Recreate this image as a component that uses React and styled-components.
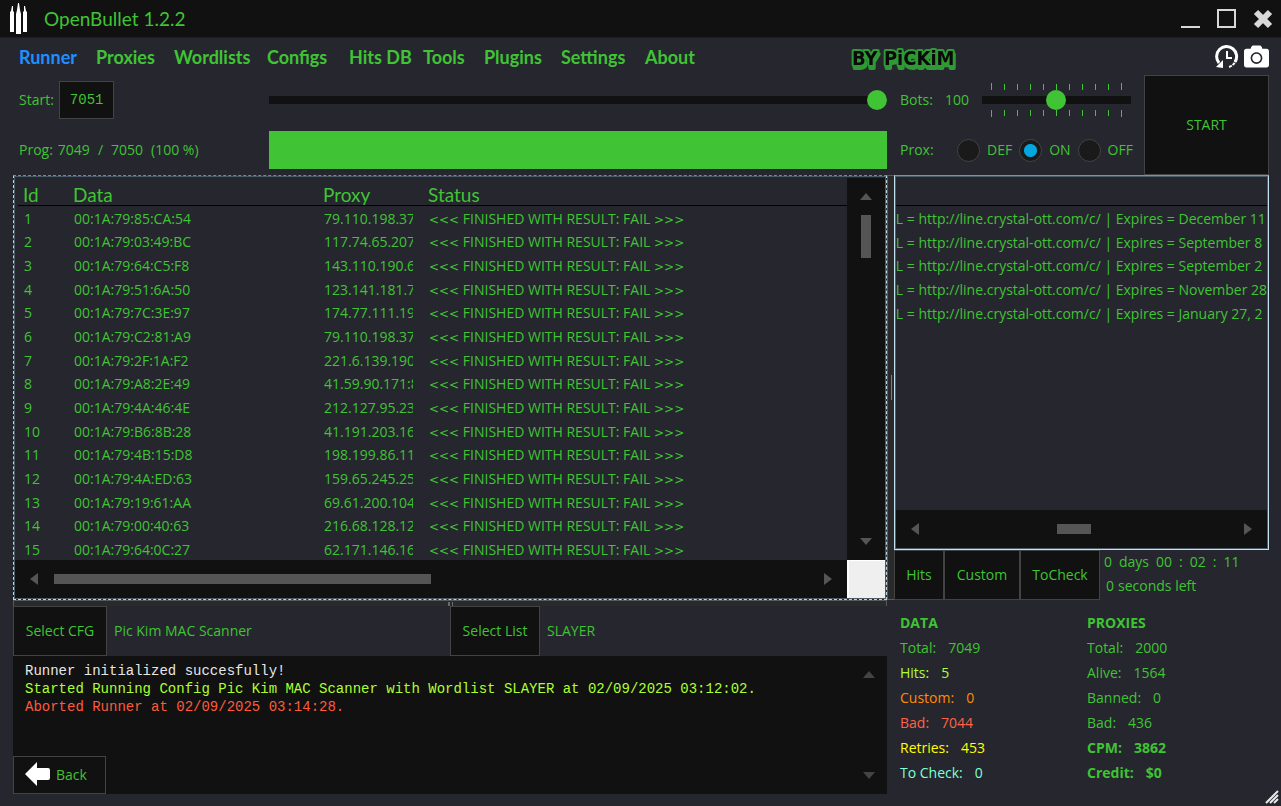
import React from "react";
import styled, { createGlobalStyle } from "styled-components";
import { FaCamera } from "react-icons/fa";

const green = "#40c334";
const bg = "#26262f";
const dark = "#111111";
const edge = "#434343";
const thumb = "#555555";

const Global = createGlobalStyle`
  * { box-sizing: border-box; }
  html, body { margin: 0; padding: 0; background: ${bg}; }
  body, button, input { font-family: "Open Sans", "Noto Sans", sans-serif; font-size: 14px; color: ${green}; }
`;

const Window = styled.div`
  display: flex;
  flex-direction: column;
  height: 100vh;
  min-height: 700px;
  min-width: 1000px;
  background: ${bg};
  line-height: 20px;
  overflow: hidden;
`;

const TitleBar = styled.header`
  display: flex;
  align-items: center;
  height: 38px;
  padding: 0 8px;
  background: ${dark};
  border-bottom: 1px solid #1e1e22;
`;

const Title = styled.h1`
  flex: 1;
  margin: 0 0 0 15px;
  font: 400 19px/36px Lato, sans-serif;
`;

const IconButton = styled.button`
  display: flex;
  padding: 0;
  border: 0;
  background: none;
  color: ${(p) => p.$color || "#ffffff"};
`;

const WindowButtons = styled.div`
  display: flex;
  gap: 16px;
`;

const MenuBar = styled.nav`
  display: flex;
  align-items: center;
  height: 37px;
  padding: 0 12px 0 19px;
`;

const MenuLinks = styled.div`
  display: grid;
  flex: 1;
  grid-template-columns: 77px 78px 93px 82px 74px 61px 77px 84px 1fr;
`;

const MenuLink = styled.a`
  color: ${(p) => (p.$active ? "#1e90ff" : green)};
  font: 700 18px/36px Lato, sans-serif;
  text-decoration: none;
  white-space: nowrap;
`;

const Badge = styled.svg`
  margin-right: 262px;
  overflow: visible;
  filter: drop-shadow(1px 3px 0 #2f9a35);
`;

const MenuIcons = styled.div`
  display: flex;
  align-items: center;
  gap: 5px;
`;

const Main = styled.main`
  display: grid;
  flex: 1;
  min-height: 0;
  grid-template-columns: minmax(0, 1fr) 7px 375px;
  grid-template-rows: 100px minmax(0, 1fr) 194px;
  padding: 0 12px 12px 13px;
`;

const ProgressPanel = styled.section`
  display: grid;
  grid-template-columns: 256px 1fr;
  grid-template-rows: 50px 50px;
  align-items: center;
  grid-column: 1;
`;

const Field = styled.label`
  display: flex;
  align-items: center;
  gap: 5px;
  padding-left: 6px;
  white-space: pre;
`;

const Counts = styled.span`
  display: flex;
  gap: 8px;
`;

const StartInput = styled.input`
  width: 55px;
  height: 38px;
  padding: 0 0 0 10px;
  border: 1px solid ${edge};
  background: ${dark};
  font-family: "Liberation Mono", monospace;
`;

const Slider = styled.input`
  appearance: none;
  display: block;
  width: 100%;
  height: 20px;
  margin: 0;
  background: linear-gradient(${dark}, ${dark}) center / 100% 8px no-repeat;
  &::-webkit-slider-thumb {
    appearance: none;
    width: 20px;
    height: 20px;
    border-radius: 50%;
    background: ${green};
  }
`;

const ProgressBar = styled.div`
  height: 38px;
  background: ${green};
`;

const RunPanel = styled.section`
  display: grid;
  grid-template-columns: 1fr 125px;
  grid-column: 3;
`;

const RunRows = styled.div`
  display: grid;
  grid-template-rows: 50px 50px;
  align-items: center;
  padding-left: 6px;
`;

const RunRow = styled.div`
  display: grid;
  grid-template-columns: ${(p) => p.$columns};
  align-items: center;
`;

const Ticks = styled.div`
  display: flex;
  justify-content: space-between;
  align-items: ${(p) => p.$align};
  height: 7px;
  padding: 0 9px;
`;

const Tick = styled.i`
  width: 1px;
  height: ${(p) => (p.$long ? 7 : 6)}px;
  background: ${green};
`;

const RadioGroup = styled.div`
  display: flex;
  gap: 7px;
`;

const RadioLabel = styled.label`
  display: flex;
  align-items: center;
  gap: 7px;
`;

const Radio = styled.input`
  appearance: none;
  width: 23px;
  height: 23px;
  margin: 0;
  border: 1px solid ${edge};
  border-radius: 50%;
  background: #1a1a1a;
  &:checked {
    background: radial-gradient(circle, #05a6e0 6px, #1a1a1a 7px);
  }
`;

const Button = styled.button`
  display: flex;
  align-items: center;
  justify-content: ${(p) => p.$align || "center"};
  gap: 5px;
  width: ${(p) => p.$width};
  height: ${(p) => p.$height || "50px"};
  padding: ${(p) => (p.$align ? "0 11px" : "0")};
  border: 1px solid ${edge};
  background: ${dark};
  line-height: 20px;
`;

const ResultsBox = styled.section`
  display: grid;
  grid-template-columns: minmax(0, 1fr) 38px;
  grid-template-rows: minmax(0, 1fr) 38px;
  grid-column: 1;
  border: 1px dashed #b9d7e6;
  border-top-color: #5591bd;
  box-shadow: inset 0 0 0 1px #4b5c68;
  padding: 2px 1px 1px 1px;
`;

const TableView = styled.div`
  overflow: hidden;
  padding-left: 3px;
`;

const Table = styled.table`
  width: 100%;
  border-spacing: 0;
  table-layout: fixed;
`;

const Th = styled.th`
  width: ${(p) => p.$width};
  height: 28px;
  padding: 6px 0 0 5px;
  border-bottom: 1px solid #000000;
  font: 400 19px/20px Lato, sans-serif;
  text-align: left;
`;

const Tr = styled.tr`
  height: 24px;
  &:nth-child(3n + 2) {
    height: 23px;
  }
`;

const Td = styled.td`
  padding: 1px 10px 0 6px;
  line-height: 22px;
  white-space: nowrap;
`;

const Clip = styled.div`
  overflow: hidden;
`;

const Chevrons = styled.span`
  font-family: "DejaVu Sans", sans-serif;
  font-size: 12px;
  line-height: 12px;
`;

const ScrollTrack = styled.div`
  display: flex;
  flex-direction: ${(p) => (p.$vertical ? "column" : "row")};
  align-items: center;
  justify-content: space-between;
  padding: ${(p) => (p.$vertical ? "15px 0" : "0 15px")};
  background: ${dark};
`;

const ThumbLane = styled.div`
  display: flex;
  flex: 1;
  flex-direction: ${(p) => (p.$vertical ? "column" : "row")};
  padding: ${(p) => p.$pad};
`;

const Thumb = styled.div`
  width: ${(p) => p.$w};
  height: ${(p) => p.$h};
  background: ${thumb};
`;

const Corner = styled.div`
  border: solid #ffffff;
  border-width: 1px 0 0 2px;
  background: #efefef;
`;

const VSplitter = styled.div`
  display: flex;
  align-items: center;
  justify-content: center;
  grid-column: 2;
  border: 1px solid #5a5a5a;
  border-right: 0;
  background: #2a2a2a;
`;

const VGrip = styled.div`
  width: 1px;
  height: 25px;
  background: #7c7c7c;
`;

const HitsPane = styled.section`
  display: grid;
  grid-template-rows: minmax(0, 1fr) 50px;
  grid-column: 3;
`;

const HitsBox = styled.div`
  display: grid;
  grid-template-rows: 29px minmax(0, 1fr) 38px;
  border: 1px solid #c2e2f2;
  border-top-color: #5a9bc8;
  box-shadow: inset 0 0 0 1px #4b5c68;
  padding: 1px;
`;

const HitsHeader = styled.div`
  border-bottom: 1px solid #000000;
`;

const HitList = styled.ul`
  overflow: hidden;
  margin: 0;
  padding: 1px 0 0;
  list-style: none;
`;

const Hit = styled.li`
  height: 24px;
  margin-left: -19px;
  line-height: 23px;
  white-space: nowrap;
  &:nth-child(3n + 2) {
    height: 23px;
  }
`;

const HitActions = styled.div`
  display: flex;
`;

const Timer = styled.div`
  padding-left: 4px;
  line-height: 24px;
  white-space: nowrap;
`;

const TimerRow = styled.div`
  display: flex;
  gap: ${(p) => p.$gap};
  padding-left: ${(p) => p.$indent};
`;

const BottomLeft = styled.section`
  display: grid;
  grid-template-rows: 6px 50px minmax(0, 1fr);
  grid-column: 1;
`;

const HSplitter = styled.div`
  display: flex;
  align-items: flex-end;
  justify-content: center;
  gap: 2px;
  border: 1px solid #5a5a5a;
  border-bottom: 0;
  background: #2a2a2a;
`;

const HGrip = styled.div`
  width: ${(p) => p.$w};
  height: 4px;
  background: #6a6a6a;
`;

const Pickers = styled.div`
  display: grid;
  grid-template-columns: 1fr 1fr;
`;

const Picker = styled.div`
  display: flex;
  align-items: center;
  gap: 7px;
`;

const Log = styled.div`
  display: grid;
  grid-template-columns: 1fr 37px;
  background: ${dark};
`;

const LogMain = styled.div`
  display: flex;
  flex-direction: column;
  justify-content: space-between;
`;

const LogLines = styled.div`
  padding: 6px 0 0 12px;
  font: 14px/18px "Liberation Mono", monospace;
`;

const LogLine = styled.div`
  color: ${(p) => p.$color};
`;

const Stats = styled.section`
  display: grid;
  grid-template-columns: 187px 1fr;
  grid-column: 3;
  padding: 10px 0 0 6px;
`;

const StatHead = styled.h2`
  margin: 0;
  font-size: 14px;
  line-height: 25px;
`;

const StatRow = styled.div`
  display: flex;
  gap: 12px;
  color: ${(p) => p.$color || green};
  font-weight: ${(p) => (p.$bold ? 700 : 400)};
  line-height: 25px;
`;

const ResizeGrip = styled.svg`
  position: absolute;
  right: 2px;
  bottom: 2px;
`;

const Shell = styled.div`
  position: relative;
`;

const rows = [
  ["00:1A:79:85:CA:54", "79.110.198.37"],
  ["00:1A:79:03:49:BC", "117.74.65.207"],
  ["00:1A:79:64:C5:F8", "143.110.190.6"],
  ["00:1A:79:51:6A:50", "123.141.181.7"],
  ["00:1A:79:7C:3E:97", "174.77.111.19"],
  ["00:1A:79:C2:81:A9", "79.110.198.37"],
  ["00:1A:79:2F:1A:F2", "221.6.139.190"],
  ["00:1A:79:A8:2E:49", "41.59.90.171:8"],
  ["00:1A:79:4A:46:4E", "212.127.95.23"],
  ["00:1A:79:B6:8B:28", "41.191.203.16"],
  ["00:1A:79:4B:15:D8", "198.199.86.11"],
  ["00:1A:79:4A:ED:63", "159.65.245.25"],
  ["00:1A:79:19:61:AA", "69.61.200.104"],
  ["00:1A:79:00:40:63", "216.68.128.12"],
  ["00:1A:79:64:0C:27", "62.171.146.16"],
];

const hits = ["December 11", "September 8", "September 2", "November 28", "January 27, 2"];

const dataStats = [
  ["Total:", "7049"],
  ["Hits:", "5", "#adff2f"],
  ["Custom:", "0", "#ff8c00"],
  ["Bad:", "7044", "#ff6347"],
  ["Retries:", "453", "#ffff00"],
  ["To Check:", "0", "#7fffd4"],
];

const proxyStats = [
  ["Total:", "2000"],
  ["Alive:", "1564"],
  ["Banned:", "0"],
  ["Bad:", "436"],
  ["CPM:", "3862", green, true],
  ["Credit:", "$0", green, true],
];

const arrows = {
  up: "M0 7 L6 0 L12 7Z",
  down: "M0 0 L6 7 L12 0Z",
  left: "M8 0 L0 6 L8 12Z",
  right: "M0 0 L8 6 L0 12Z",
};

function Arrow({ dir, color = thumb }) {
  const tall = dir === "left" || dir === "right";
  return (
    <svg width={tall ? 8 : 12} height={tall ? 12 : 7} aria-hidden="true">
      <path d={arrows[dir]} fill={color} />
    </svg>
  );
}

function TickRow({ align }) {
  return (
    <Ticks $align={align}>
      {Array.from({ length: 11 }, (_, i) => (
        <Tick key={i} $long={i === 0 || i === 10} />
      ))}
    </Ticks>
  );
}

function StatColumn({ title, items }) {
  return (
    <div>
      <StatHead>{title}</StatHead>
      {items.map(([label, value, color, bold]) => (
        <StatRow key={label} $color={color} $bold={bold}>
          <span>{label}</span>
          <span>{value}</span>
        </StatRow>
      ))}
    </div>
  );
}

export default function App() {
  return (
    <Shell>
      <Global />
      <Window>
        <TitleBar>
          <svg width="21" height="32" viewBox="0 0 21 32" fill="#ffffff" aria-hidden="true">
            <path d="M2 29 V9 L3 8 L4 3 H5 L5 8 L6 9 V29Z M8 31 V11 L9 7 L10 0 H11 L12 7 L13 11 V31Z M15 29 V9 L16 8 L16 3 H17 L18 8 L19 9 V29Z" />
          </svg>
          <Title>OpenBullet 1.2.2</Title>
          <WindowButtons>
            <IconButton aria-label="Minimize">
              <svg width="20" height="22"><path d="M0 19H19" stroke="#d8d8d8" strokeWidth="2" /></svg>
            </IconButton>
            <IconButton aria-label="Maximize">
              <svg width="20" height="22"><rect x="1" y="2" width="17" height="17" fill="none" stroke="#d8d8d8" strokeWidth="2" /></svg>
            </IconButton>
            <IconButton aria-label="Close">
              <svg width="20" height="22"><path d="M3 4 L17 18 M17 4 L3 18" stroke="#d8d8d8" strokeWidth="6" /></svg>
            </IconButton>
          </WindowButtons>
        </TitleBar>

        <MenuBar>
          <MenuLinks>
            {["Runner", "Proxies", "Wordlists", "Configs", "Hits DB", "Tools", "Plugins", "Settings", "About"].map((name, i) => (
              <MenuLink key={name} href="#" $active={i === 0}>{name}</MenuLink>
            ))}
          </MenuLinks>
          <Badge width="102" height="32" viewBox="0 0 102 32" fontFamily="'DejaVu Sans Condensed', 'DejaVu Sans', sans-serif" fontWeight="700" fontSize="20">
            <text x="1" y="24" fill="#0a0a0a" stroke="#2f9a35" strokeWidth="4" strokeLinejoin="round" paintOrder="stroke">BY PiCKiM</text>
          </Badge>
          <MenuIcons>
            <IconButton aria-label="History">
              <svg width="24" height="24" viewBox="0 0 24 24" fill="none" stroke="#ffffff">
                <path d="M4 18 A10 10 0 1 1 20 17" strokeWidth="3" />
                <path d="M21 14 A10 10 0 0 1 14 22" strokeWidth="2" strokeDasharray="3 1" />
                <path d="M1 22 L8 23 L8 15Z" fill="#ffffff" stroke="none" />
                <path d="M12 6 V13 H17" strokeWidth="2" />
              </svg>
            </IconButton>
            <IconButton aria-label="Screenshot"><FaCamera size={25} /></IconButton>
          </MenuIcons>
        </MenuBar>

        <Main>
          <ProgressPanel>
            <Field>Start:<StartInput defaultValue="7051" /></Field>
            <Slider type="range" aria-label="Start position" min="0" max="7051" defaultValue="7051" />
            <Field as="div">
              <span>Prog:</span>
              <Counts><span>7049</span><span>/</span><span>7050</span><span>(100 %)</span></Counts>
            </Field>
            <ProgressBar role="progressbar" aria-valuenow={100} />
          </ProgressPanel>

          <RunPanel>
            <RunRows>
              <RunRow $columns="45px 37px 149px">
                <label htmlFor="bots">Bots:</label>
                <span>100</span>
                <div>
                  <TickRow align="flex-end" />
                  <Slider id="bots" type="range" min="0" max="200" defaultValue="99" />
                  <TickRow align="flex-start" />
                </div>
              </RunRow>
              <RunRow $columns="57px 1fr">
                <span>Prox:</span>
                <RadioGroup>
                  {["DEF", "ON", "OFF"].map((mode) => (
                    <RadioLabel key={mode}>
                      <Radio type="radio" name="proxy" defaultChecked={mode === "ON"} />
                      {mode}
                    </RadioLabel>
                  ))}
                </RadioGroup>
              </RunRow>
            </RunRows>
            <Button $height="100px">START</Button>
          </RunPanel>

          <ResultsBox>
            <TableView>
              <Table>
                <thead>
                  <tr>
                    <Th $width="50px">Id</Th>
                    <Th $width="250px">Data</Th>
                    <Th $width="105px">Proxy</Th>
                    <Th>Status</Th>
                  </tr>
                </thead>
                <tbody>
                  {rows.map(([data, proxy], i) => (
                    <Tr key={data}>
                      <Td>{i + 1}</Td>
                      <Td>{data}</Td>
                      <Td><Clip>{proxy}</Clip></Td>
                      <Td>
                        <Chevrons>{"<<<"}</Chevrons> FINISHED WITH RESULT: FAIL <Chevrons>{">>>"}</Chevrons>
                      </Td>
                    </Tr>
                  ))}
                </tbody>
              </Table>
            </TableView>
            <ScrollTrack $vertical>
              <Arrow dir="up" />
              <ThumbLane $vertical $pad="15px 0"><Thumb $w="10px" $h="43px" /></ThumbLane>
              <Arrow dir="down" />
            </ScrollTrack>
            <ScrollTrack>
              <Arrow dir="left" />
              <ThumbLane $pad="0 16px"><Thumb $w="377px" $h="10px" /></ThumbLane>
              <Arrow dir="right" />
            </ScrollTrack>
            <Corner />
          </ResultsBox>

          <VSplitter><VGrip /></VSplitter>

          <HitsPane>
            <HitsBox>
              <HitsHeader />
              <HitList>
                {hits.map((date) => (
                  <Hit key={date}>URL = http://line.crystal-ott.com/c/ | Expires = {date}</Hit>
                ))}
              </HitList>
              <ScrollTrack>
                <Arrow dir="left" />
                <ThumbLane $pad="0 0 0 138px"><Thumb $w="34px" $h="10px" /></ThumbLane>
                <Arrow dir="right" />
              </ScrollTrack>
            </HitsBox>
            <HitActions>
              <Button $width="50px">Hits</Button>
              <Button $width="76px">Custom</Button>
              <Button $width="80px">ToCheck</Button>
              <Timer>
                <TimerRow $gap="7px">
                  {["0", "days", "00", ":", "02", ":", "11"].map((part, i) => <span key={i}>{part}</span>)}
                </TimerRow>
                <TimerRow $gap="4px" $indent="2px"><span>0</span><span>seconds left</span></TimerRow>
              </Timer>
            </HitActions>
          </HitsPane>

          <BottomLeft>
            <HSplitter><HGrip $w="2px" /><HGrip $w="1px" /></HSplitter>
            <Pickers>
              <Picker><Button $width="94px">Select CFG</Button>Pic Kim MAC Scanner</Picker>
              <Picker><Button $width="90px">Select List</Button>SLAYER</Picker>
            </Pickers>
            <Log>
              <LogMain>
                <LogLines>
                  <LogLine $color="#e6e6e6">Runner initialized succesfully!</LogLine>
                  <LogLine $color="#adff2f">Started Running Config Pic Kim MAC Scanner with Wordlist SLAYER at 02/09/2025 03:12:02.</LogLine>
                  <LogLine $color="#ff5a3c">Aborted Runner at 02/09/2025 03:14:28.</LogLine>
                </LogLines>
                <Button $width="93px" $height="38px" $align="flex-start">
                  <svg width="26" height="26" fill="#ffffff" aria-hidden="true">
                    <path d="M0 12 L12 0 V6 H23 Q25 6 25 8 V16 Q25 18 23 18 H12 V24Z" />
                  </svg>
                  Back
                </Button>
              </LogMain>
              <ScrollTrack $vertical>
                <Arrow dir="up" color="#444444" />
                <Arrow dir="down" color="#444444" />
              </ScrollTrack>
            </Log>
          </BottomLeft>

          <Stats>
            <StatColumn title="DATA" items={dataStats} />
            <StatColumn title="PROXIES" items={proxyStats} />
          </Stats>
        </Main>
      </Window>
      <ResizeGrip width="14" height="14" stroke="#e8e8e8" strokeWidth="2" aria-hidden="true">
        <path d="M1 13 L13 1 M5 13 L13 5 M9 13 L13 9" />
      </ResizeGrip>
    </Shell>
  );
}
